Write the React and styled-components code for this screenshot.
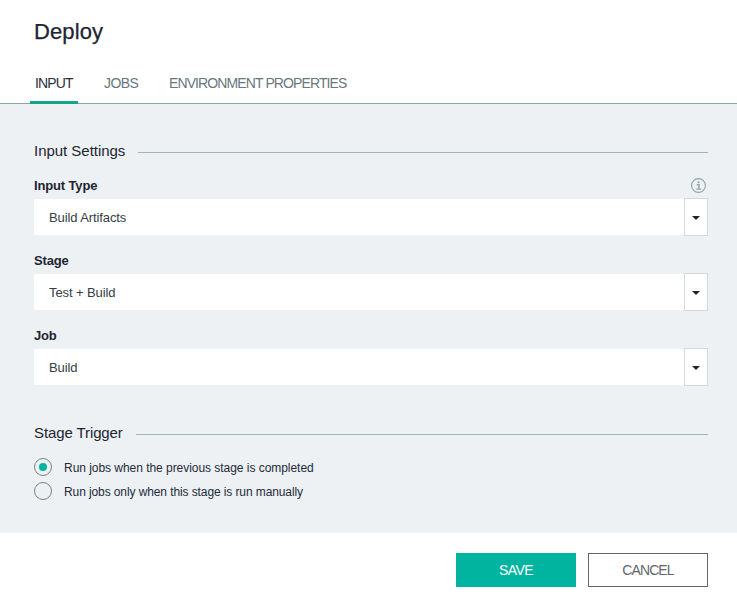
import React, { useState } from "react";
import styled, { createGlobalStyle } from "styled-components";

const GlobalStyle = createGlobalStyle`
  *, *::before, *::after { box-sizing: border-box; }
  body {
    margin: 0;
    background: #fff;
    color: #1d2532;
    font-family: "Liberation Sans", Arial, sans-serif;
    font-size: 13px;
  }
  button { font-family: inherit; margin: 0; padding: 0; }
`;

const Dialog = styled.div`
  display: flex;
  flex-direction: column;
  width: 737px;
  height: 601px;
  background: #fff;
`;

const Header = styled.header`
  height: 104px;
  border-bottom: 1px solid #91a3a6;
`;

const Title = styled.h1`
  margin: 0;
  padding: 19px 0 0 34px;
  height: 64px;
  font-size: 22px;
  line-height: 26px;
  font-weight: 400;
  letter-spacing: 0.1px;
  -webkit-text-stroke: 0.25px currentColor;
`;

const Tabs = styled.nav`
  display: flex;
  gap: 21px;
  height: 40px;
  padding-left: 30px;
`;

const Tab = styled.button`
  width: ${(p) => p.$width}px;
  height: 40px;
  padding: 2px 0 0 5px;
  border: 0;
  border-bottom: 3px solid ${(p) => (p.$active ? "#17a589" : "transparent")};
  background: none;
  color: ${(p) => (p.$active ? "#2b303c" : "#69777e")};
  font-size: 14px;
  line-height: 35px;
  letter-spacing: ${(p) => p.$spacing}px;
  text-align: left;
  white-space: nowrap;
`;

const Body = styled.main`
  height: 429px;
  padding: 37px 29px 0 34px;
  background: #edf1f4;
`;

const SectionHeading = styled.div`
  display: flex;
  align-items: center;
  height: 20px;
  margin-bottom: ${(p) => p.$after}px;

  &::after {
    content: "";
    flex: 1;
    height: 1px;
    margin: 3px 0 0 13px;
    background: #a3b4b8;
  }
`;

const SectionTitle = styled.h2`
  margin: 0;
  font-size: 15px;
  line-height: 20px;
  font-weight: 400;
  letter-spacing: ${(p) => p.$spacing}px;
  white-space: nowrap;
`;

const Fields = styled.section`
  margin-bottom: 36px;
  display: grid;
  gap: 14px;
`;

const Field = styled.div`
  height: 61px;
`;

const FieldTop = styled.div`
  display: flex;
  justify-content: space-between;
  height: 22px;
  padding: 1px 2px 0 0;
`;

const Label = styled.span`
  font-weight: 700;
  line-height: 18px;
  letter-spacing: -0.15px;
`;

const Select = styled.div`
  display: flex;
  align-items: center;
  height: 38px;
`;

const Value = styled.span`
  flex: 1;
  height: 36px;
  padding: 1px 0 0 15px;
  background: #fff;
  color: #333e46;
  line-height: 35px;
  letter-spacing: -0.1px;
`;

const Arrow = styled.button`
  display: flex;
  align-items: center;
  justify-content: center;
  width: 24px;
  height: 38px;
  border: 1px solid #d2d8df;
  background: #fff;

  &::after {
    content: "";
    margin-top: 2px;
    border: 4px solid transparent;
    border-top-color: #1d2532;
    border-bottom: 0;
  }
`;

const InfoSvg = styled.svg`
  display: block;
  margin-top: 1px;
`;

const RadioRow = styled.div`
  display: flex;
  align-items: center;
  gap: 12px;
  height: 24px;
  font-size: 12px;
  line-height: 24px;
  color: #242a38;
  letter-spacing: ${(p) => p.$spacing}px;
`;

const RadioText = styled.span`
  padding-top: 1px;
`;

const RadioDot = styled.span`
  display: flex;
  align-items: center;
  justify-content: center;
  width: 18px;
  height: 18px;
  border: 1px solid #728388;
  border-radius: 50%;

  &::after {
    content: "";
    width: 8px;
    height: 8px;
    border-radius: 50%;
    background: ${(p) => (p.$checked ? "#00b39b" : "transparent")};
  }
`;

const Footer = styled.footer`
  display: flex;
  justify-content: flex-end;
  gap: 12px;
  padding: 20px 29px 0;
`;

const Button = styled.button`
  width: 120px;
  height: 34px;
  border: 1px solid ${(p) => (p.$primary ? "#00b4a0" : "#63666b")};
  background: ${(p) => (p.$primary ? "#00b4a0" : "#fff")};
  color: ${(p) => (p.$primary ? "#fff" : "#63666b")};
  font-size: 14px;
  line-height: 32px;
  letter-spacing: ${(p) => p.$spacing}px;
`;

const InfoIcon = () => (
  <InfoSvg width="15" height="15" viewBox="0 0 15 15" fill="none" stroke="#91a3ad">
    <circle cx="7.5" cy="7.5" r="6.9" strokeWidth="1.1" />
    <circle cx="7.5" cy="4.2" r="1" fill="#91a3ad" stroke="none" />
    <path d="M5.8 6.7H8V11M5.3 11.1h4.6" strokeWidth="1.4" />
  </InfoSvg>
);

const tabs = [
  { name: "INPUT", width: 48, spacing: -0.85 },
  { name: "JOBS", width: 44, spacing: -0.6 },
  { name: "ENVIRONMENT PROPERTIES", width: 188, spacing: -0.89 },
];

const fields = [
  { label: "Input Type", value: "Build Artifacts", info: true },
  { label: "Stage", value: "Test + Build" },
  { label: "Job", value: "Build" },
];

const triggers = [
  { text: "Run jobs when the previous stage is completed", spacing: -0.04 },
  { text: "Run jobs only when this stage is run manually", spacing: -0.1 },
];

export default function App() {
  const [tab, setTab] = useState(0);
  const [trigger, setTrigger] = useState(0);
  return (
    <>
      <GlobalStyle />
      <Dialog>
        <Header>
          <Title>Deploy</Title>
          <Tabs>
            {tabs.map((t, i) => (
              <Tab key={t.name} $width={t.width} $spacing={t.spacing} $active={i === tab} onClick={() => setTab(i)}>
                {t.name}
              </Tab>
            ))}
          </Tabs>
        </Header>
        <Body>
          <SectionHeading $after={15}>
            <SectionTitle $spacing={-0.03}>Input Settings</SectionTitle>
          </SectionHeading>
          <Fields>
            {fields.map((f) => (
              <Field key={f.label}>
                <FieldTop>
                  <Label>{f.label}</Label>
                  {f.info && <InfoIcon />}
                </FieldTop>
                <Select>
                  <Value>{f.value}</Value>
                  <Arrow aria-label={f.label} />
                </Select>
              </Field>
            ))}
          </Fields>
          <SectionHeading $after={12}>
            <SectionTitle $spacing={-0.1}>Stage Trigger</SectionTitle>
          </SectionHeading>
          {triggers.map((t, i) => (
            <RadioRow key={t.text} $spacing={t.spacing} onClick={() => setTrigger(i)}>
              <RadioDot $checked={i === trigger} />
              <RadioText>{t.text}</RadioText>
            </RadioRow>
          ))}
        </Body>
        <Footer>
          <Button $primary $spacing={-0.6}>SAVE</Button>
          <Button $spacing={-0.9}>CANCEL</Button>
        </Footer>
      </Dialog>
    </>
  );
}
